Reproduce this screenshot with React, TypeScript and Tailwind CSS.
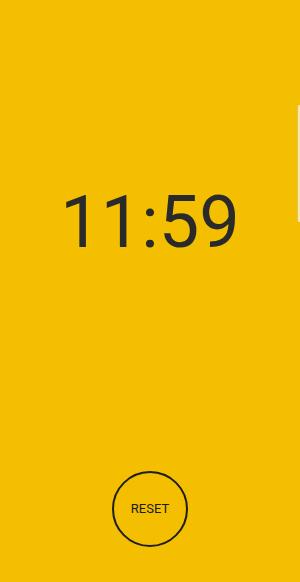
export default function App() {
  return (
    <div
      className="relative flex h-[582px] w-[300px] flex-col items-center overflow-hidden bg-[#f3bf00] pt-[187px] pb-[35px]"
      style={{ fontFamily: "Roboto, 'Liberation Sans', sans-serif" }}
    >
      {/* time */}
      <div className="text-[72px] leading-none text-[#2a2a2a]">11:59</div>

      <div className="flex-1" />

      {/* reset button */}
      <button className="flex h-[76px] w-[76px] items-center justify-center rounded-full border-2 border-[#1e1e1e] text-[13px] text-[#1a1a1a]">
        RESET
      </button>

      {/* edge panel handle */}
      <div className="absolute right-0 top-[105px] h-[117px] w-[3px] rounded-l-[2px] border-l border-[#e2c25a] bg-[#fbe7a8]" />
    </div>
  );
}
